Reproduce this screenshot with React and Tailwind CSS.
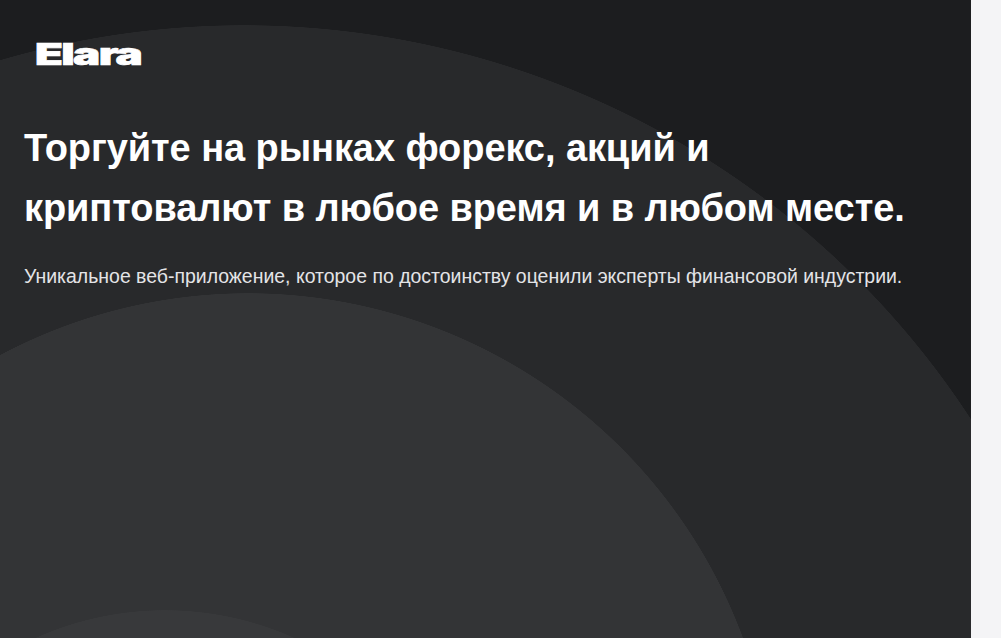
import React from 'react';

const App = () => {
  return (
    <div className="flex h-[638px] w-[1001px] overflow-hidden bg-[#f4f4f6] font-['Liberation_Sans',Arial,sans-serif]">
      {/* Dark panel, the three arcs are part of its background */}
      <div className="h-full w-[971px] overflow-hidden bg-[#1c1d1f] bg-[radial-gradient(circle_at_165px_926px,#38393b_315.5px,transparent_316px),radial-gradient(circle_at_248px_821px,#333436_527.5px,transparent_528px),radial-gradient(circle_at_244px_893px,#28292b_867.5px,transparent_868px)] px-6 pt-[38px]">
        <div className="ml-[11px] h-[32px] origin-left scale-x-[1.52] font-['Inter',sans-serif] text-[30px] leading-[32px] font-black tracking-[-1.1px] text-white [-webkit-text-stroke:0.7px_white]">
          Elara
        </div>
        <h1 className="mt-[48px] text-[38px] leading-[60px] font-bold tracking-[-0.08px] text-white">
          Торгуйте на рынках форекс, акций и
          <br />
          криптовалют в любое время и в любом месте.
        </h1>
        <p className="mt-[24px] text-[19.47px] leading-[28px] text-[#e4e4e7]">
          Уникальное веб-приложение, которое по достоинству оценили эксперты финансовой индустрии.
        </p>
      </div>
    </div>
  );
};

export default App;
